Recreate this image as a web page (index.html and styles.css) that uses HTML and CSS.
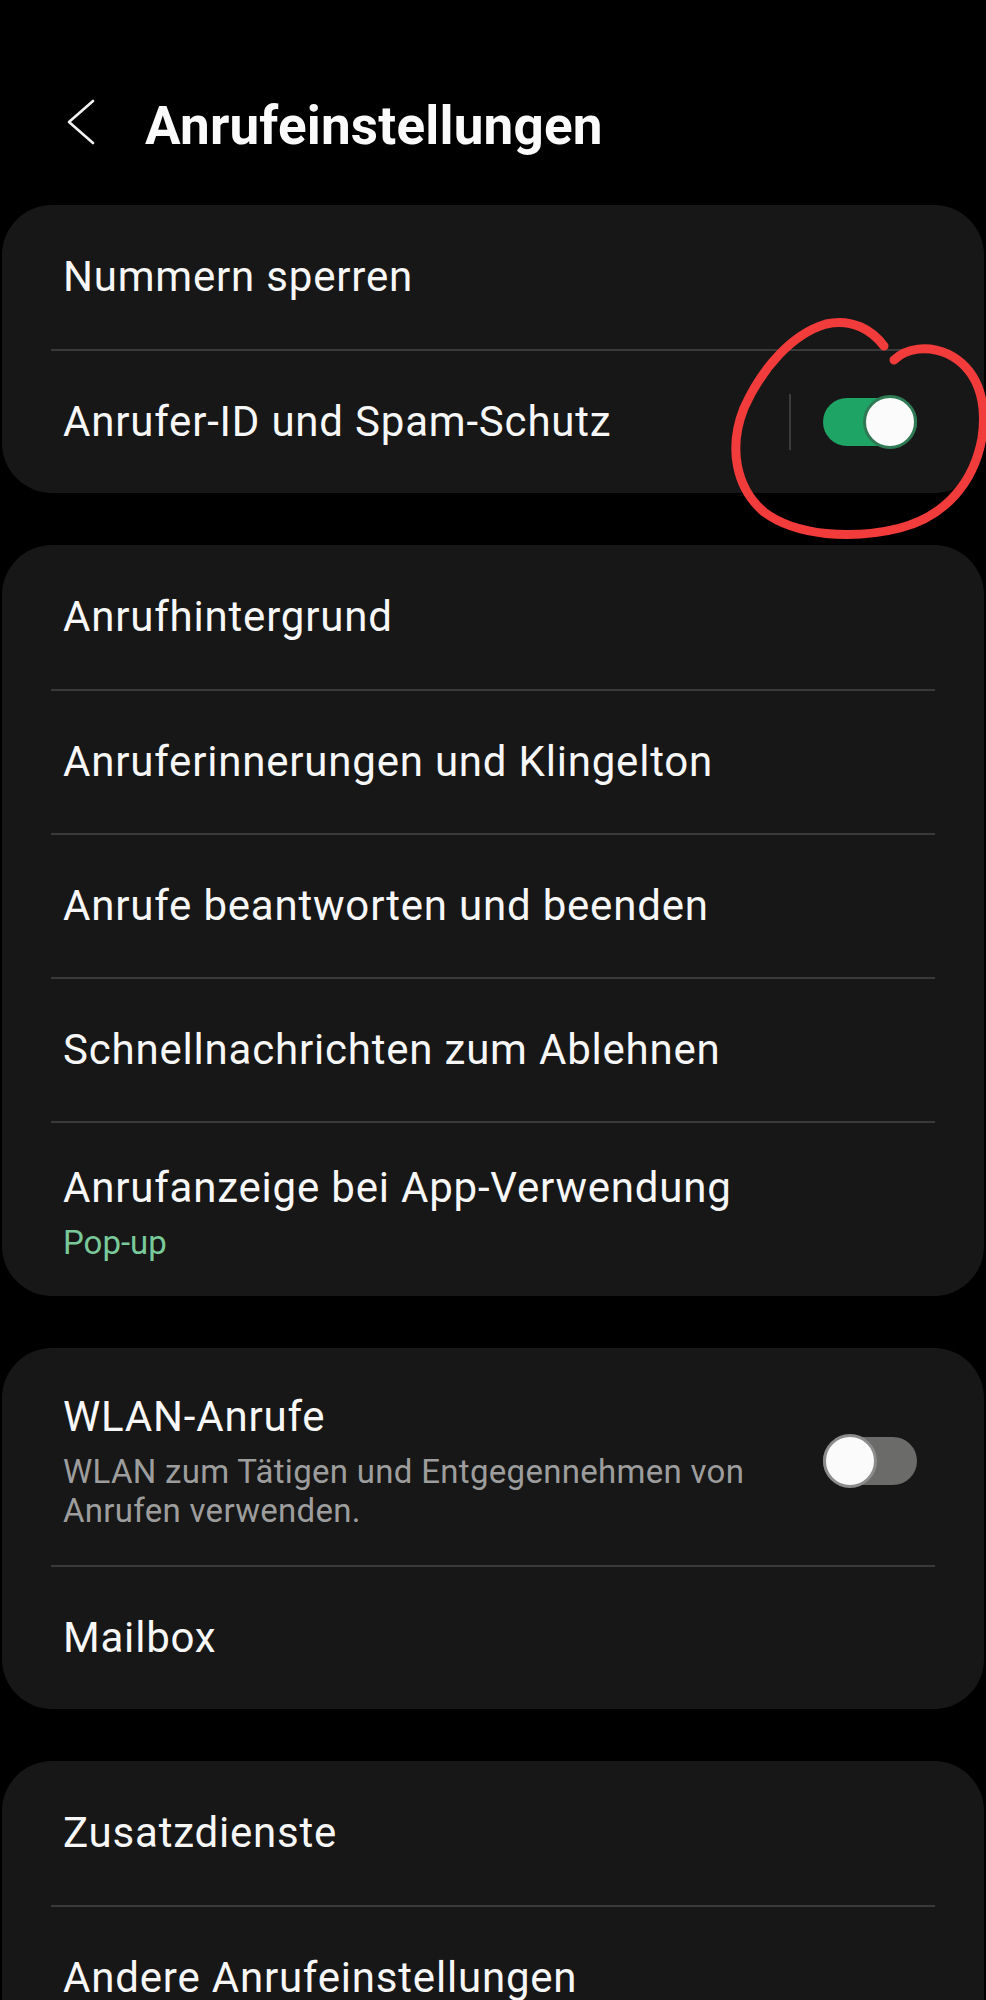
FILE: index.html
```html
<!DOCTYPE html>
<html lang="de">
<head>
<meta charset="utf-8">
<title>Anrufeinstellungen</title>
<link rel="stylesheet" href="styles.css">
</head>
<body>
<div class="page">
  <header class="header">
    <svg class="back" width="30" height="50" viewBox="0 0 30 50" aria-hidden="true">
      <path d="M27 4 L3 25 L27 46" fill="none" stroke="#f2f2f2" stroke-width="2.6" stroke-linecap="round" stroke-linejoin="round"/>
    </svg>
    <h1 class="title">Anrufeinstellungen</h1>
  </header>

  <section class="card">
    <div class="row"><div class="label">Nummern sperren</div></div>
    <div class="row">
      <div class="label">Anrufer-ID und Spam-Schutz</div>
      <div class="vsep"></div>
      <div class="switch on"><span class="knob"></span></div>
    </div>
  </section>

  <section class="card">
    <div class="row"><div class="label">Anrufhintergrund</div></div>
    <div class="row"><div class="label">Anruferinnerungen und Klingelton</div></div>
    <div class="row"><div class="label">Anrufe beantworten und beenden</div></div>
    <div class="row"><div class="label">Schnellnachrichten zum Ablehnen</div></div>
    <div class="row row-tall">
      <div class="text">
        <div class="label">Anrufanzeige bei App-Verwendung</div>
        <div class="value">Pop-up</div>
      </div>
    </div>
  </section>

  <section class="card">
    <div class="row row-wlan">
      <div class="text">
        <div class="label">WLAN-Anrufe</div>
        <div class="sub">WLAN zum Tätigen und Entgegennehmen von Anrufen verwenden.</div>
      </div>
      <div class="switch off"><span class="knob"></span></div>
    </div>
    <div class="row"><div class="label">Mailbox</div></div>
  </section>

  <section class="card">
    <div class="row"><div class="label">Zusatzdienste</div></div>
    <div class="row"><div class="label">Andere Anrufeinstellungen</div></div>
  </section>

  <svg class="scribble" width="986" height="600" viewBox="0 0 986 600" aria-hidden="true">
    <path d="M884 346 C872 330 852 318 826 324 C792 334 762 368 744 408 C728 448 736 488 764 512 C796 536 852 540 900 528 C946 516 974 482 982 438 C988 398 976 368 948 354 C928 345 906 348 894 360"
      fill="none" stroke="#f23b3b" stroke-width="9" stroke-linecap="round" stroke-linejoin="round"/>
  </svg>
</div>
</body>
</html>
```

FILE: styles.css
```css
* { box-sizing: border-box; }

html, body {
  margin: 0;
  padding: 0;
  background: #000;
}

body {
  font-family: Roboto, "Noto Sans", "Liberation Sans", sans-serif;
  color: #f7f7f7;
}

.page {
  position: relative;
  width: 986px;
  min-height: 2000px;
  overflow: hidden;
}

.header {
  display: flex;
  align-items: center;
  height: 205px;
  padding: 96px 0 49px 66px;
}

.back {
  display: block;
  margin-top: -8px;
  flex: none;
}

.title {
  margin: 0 0 0 49px;
  font-size: 53px;
  line-height: 60px;
  font-weight: 700;
  letter-spacing: 0.2px;
  color: #fafafa;
}

.card {
  margin: 0 2px 52px;
  background: #171717;
  border-radius: 50px;
}

.row {
  display: flex;
  align-items: center;
  min-height: 144px;
  margin: 0 49px;
  padding: 0 18px 0 12px;
}

.row + .row {
  border-top: 2px solid #3a3a3a;
}

.row-tall {
  min-height: 175px;
  padding-top: 6px;
}

.row-wlan {
  min-height: 217px;
  padding-top: 8px;
}

.label {
  font-size: 42px;
  line-height: 50px;
  letter-spacing: 0.8px;
  color: #f7f7f7;
}

.text {
  flex: 1;
  min-width: 0;
}

.value {
  font-size: 33px;
  line-height: 40px;
  color: #79c99a;
  margin-top: 10px;
}

.sub {
  font-size: 33px;
  line-height: 39px;
  letter-spacing: 0.3px;
  color: #9d9d9d;
  margin-top: 10px;
  padding-right: 40px;
}

.row .label:only-child { flex: 1; }

.vsep {
  width: 2px;
  height: 56px;
  background: #3c3c3c;
  margin: 0 32px 0 auto;
  flex: none;
}

.switch {
  position: relative;
  width: 94px;
  height: 54px;
  flex: none;
}

.switch::before {
  content: "";
  position: absolute;
  left: 0;
  right: 0;
  top: 3px;
  height: 48px;
  border-radius: 24px;
}

.switch.on::before { background: #1ea464; }
.switch.off::before { background: #6b6b69; }

.knob {
  position: absolute;
  top: 0;
  width: 54px;
  height: 54px;
  border-radius: 50%;
  background: #fbfbfb;
}

.switch.on .knob {
  right: 0;
  border: 3px solid #2f7a55;
}

.switch.off .knob {
  left: 0;
  border: 3px solid #8c8c8c;
}

.scribble {
  position: absolute;
  left: 0;
  top: 0;
  pointer-events: none;
}
```
